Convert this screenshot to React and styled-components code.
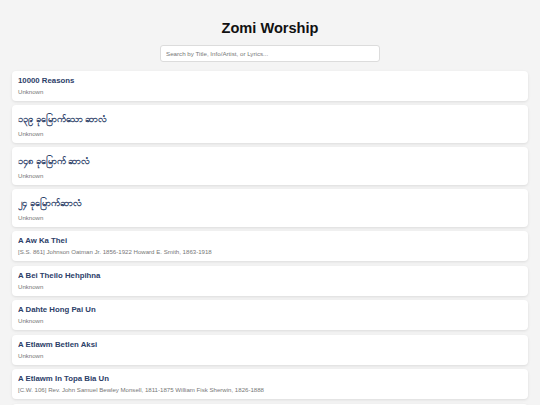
import React, { useState } from "react";
import styled, { createGlobalStyle } from "styled-components";

const GlobalStyle = createGlobalStyle`
  html, body {
    margin: 0;
    padding: 0;
    background: #f4f4f4;
    font-family: "Liberation Sans", Arial, "Noto Sans", sans-serif;
  }
`;

const Page = styled.div`
  padding: 19px 12px 12px;
`;

const Title = styled.h1`
  margin: 0;
  text-align: center;
  font-size: 14.6px;
  font-weight: bold;
  color: #111;
  line-height: 18px;
`;

const SearchBar = styled.div`
  display: flex;
  justify-content: center;
  margin: 8px 0 9px;
`;

const Input = styled.input`
  width: 220px;
  height: 17px;
  box-sizing: border-box;
  border: 1px solid #dcdcdc;
  border-radius: 3px;
  background: #fff;
  padding: 0 5px;
  font-family: "Liberation Sans", Arial, sans-serif;
  font-size: 6.2px;
  color: #333;

  &:focus {
    outline: none;
  }
  &::placeholder {
    color: #777;
  }
`;

const List = styled.div`
  display: flex;
  flex-direction: column;
  gap: 4.7px;
`;

const Card = styled.div`
  background: #fff;
  border-radius: 4px;
  box-shadow: 0 1px 3px rgba(0, 0, 0, 0.1);
  padding: 5px 6px 5px;
`;

const SongTitle = styled.div`
  font-size: ${(p) => (p.$tall ? "9.4px" : "7.8px")};
  font-weight: bold;
  color: #2c4068;
  line-height: ${(p) => (p.$tall ? "17.5px" : "10px")};
  margin-bottom: 1.8px;
  overflow: hidden;
`;

const Info = styled.div`
  font-size: 6.1px;
  color: #777;
  line-height: 8px;
`;

const songs = [
  { title: "10000 Reasons", info: "Unknown" },
  { title: "၁၃၉ ခုမြောက်သော ဆာလံ", info: "Unknown", tall: true },
  { title: "၁၄၈ ခုမြောက် ဆာလံ", info: "Unknown", tall: true },
  { title: "၂၄ ခုမြောက်ဆာလံ", info: "Unknown", tall: true },
  {
    title: "A Aw Ka Thei",
    info: "[S.S. 861] Johnson Oatman Jr. 1856-1922 Howard E. Smith, 1863-1918",
  },
  { title: "A Bei Theilo Hehpihna", info: "Unknown" },
  { title: "A Dahte Hong Pai Un", info: "Unknown" },
  { title: "A Etlawm Betlen Aksi", info: "Unknown" },
  {
    title: "A Etlawm In Topa Bia Un",
    info: "[C.W. 106] Rev. John Samuel Bewley Monsell, 1811-1875 William Fisk Sherwin, 1826-1888",
  },
  { title: "A Gam Hong Tung Hi", info: "Unknown" },
];

export default function App() {
  const [query, setQuery] = useState("");

  return (
    <Page>
      <GlobalStyle />
      <Title>Zomi Worship</Title>
      <SearchBar>
        <Input
          type="text"
          value={query}
          onChange={(e) => setQuery(e.target.value)}
          placeholder="Search by Title, Info/Artist, or Lyrics..."
        />
      </SearchBar>
      <List>
        {songs.map((s) => (
          <Card key={s.title}>
            <SongTitle $tall={s.tall}>{s.title}</SongTitle>
            <Info>{s.info}</Info>
          </Card>
        ))}
      </List>
    </Page>
  );
}
